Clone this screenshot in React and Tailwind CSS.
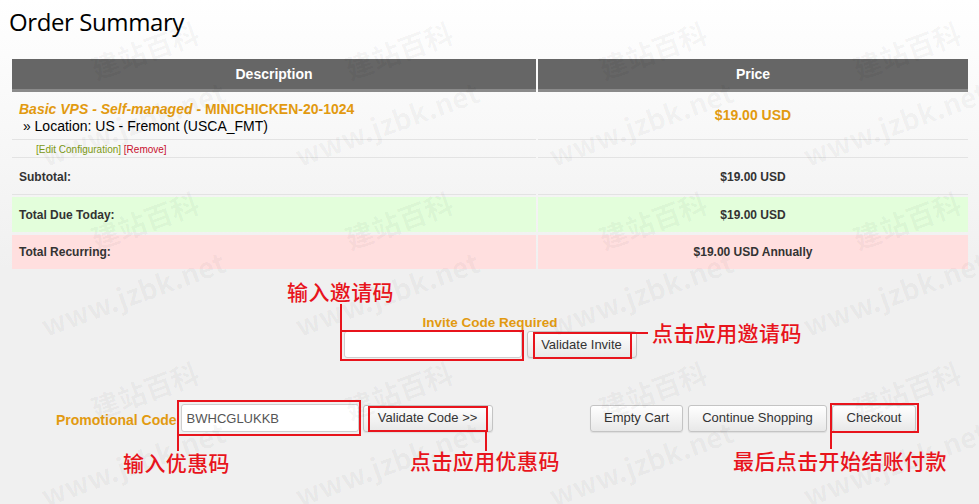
import React from 'react'

const marks = []
for (let r = 0; r < 3; r++) {
    for (let c = 0; c < 4; c++) {
        marks.push({ t: '建站百科', x: 92 + c * 254, y: 8 + r * 170 })
        marks.push({ t: 'www.jzbk.net', x: 42 + c * 254, y: 95 + r * 170 })
    }
}

const Btn = ({ children, className = '' }) => (
    <button className={"h-[27px] px-[13px] rounded-[3px] border border-[#c4c4c4] bg-[linear-gradient(to_bottom,#ffffff,#e8e8e8)] text-[13px] text-[#333] shadow-[0_1px_1px_rgba(0,0,0,0.08)] " + className}>
        {children}
    </button>
)

const Note = ({ children, className }) => (
    <div className={"absolute text-[21px] leading-none text-[#e8141c] font-medium tracking-[0.4px] whitespace-nowrap " + className} style={{ fontFamily: '"Noto Sans CJK SC", sans-serif' }}>
        {children}
    </div>
)

const App = () => {
    return (
        <div className="relative w-[979px] h-[504px] overflow-hidden bg-[linear-gradient(to_bottom,#ffffff,#f0f0f0_270px)] font-['Liberation_Sans',Arial,sans-serif]">
            {/* Title */}
            <h1 className="pl-[9px] pt-[5px] h-[59px] text-[24px] leading-[34px] text-black tracking-[-0.4px] font-['Open_Sans',sans-serif]">Order Summary</h1>

            {/* Cart table */}
            <div className="ml-[12px] w-[956px] flex flex-col gap-[2px]">
                <div className="grid grid-cols-[524px_430px] gap-[2px]">
                    <div className="h-[33px] bg-[#666] border-b-[3px] border-[#8a8a8a] text-white font-bold text-[14px] flex items-center justify-center">Description</div>
                    <div className="h-[33px] bg-[#666] border-b-[3px] border-[#8a8a8a] text-white font-bold text-[14px] flex items-center justify-center">Price</div>
                </div>
                <div className="grid grid-cols-[524px_430px] gap-[2px] -mt-[2px]">
                    <div className="h-[48px] border-b border-[#e3e3e3] pl-[7px] pt-[9px] text-[14px] leading-[17px]">
                        <div className="font-bold text-[#e29a10]"><i>Basic VPS - Self-managed</i> - MINICHICKEN-20-1024</div>
                        <div className="text-black">&nbsp;» Location: US - Fremont (USCA_FMT)</div>
                    </div>
                    <div className="h-[48px] border-b border-[#e3e3e3] flex items-center justify-center text-[14px] font-bold text-[#e29a10]">$19.00 USD</div>
                </div>
                <div className="grid grid-cols-[524px_430px] gap-[2px] -mt-[2px]">
                    <div className="h-[18px] border-b border-[#e3e3e3] pl-[24px] text-[10px] leading-[20px]">
                        <span className="text-[#7d9a14]">[Edit Configuration]</span> <span className="text-[#c8102e]">[Remove]</span>
                    </div>
                    <div className="h-[18px] border-b border-[#e3e3e3]"></div>
                </div>
                <div className="grid grid-cols-[524px_430px] gap-[2px] text-[12px] font-bold text-[#333]">
                    <div className="h-[35px] border-b border-[#e3e3e3] pl-[7px] flex items-center">Subtotal:</div>
                    <div className="h-[35px] border-b border-[#e3e3e3] flex items-center justify-center">$19.00 USD</div>
                </div>
                <div className="grid grid-cols-[524px_430px] gap-[2px] text-[12px] font-bold text-[#333]">
                    <div className="h-[35px] bg-[#e3fedb] pl-[7px] flex items-center">Total Due Today:</div>
                    <div className="h-[35px] bg-[#e3fedb] flex items-center justify-center">$19.00 USD</div>
                </div>
                <div className="grid grid-cols-[524px_430px] gap-[2px] text-[12px] font-bold text-[#333] mt-[1px]">
                    <div className="h-[34px] bg-[#ffdfdf] pl-[7px] flex items-center">Total Recurring:</div>
                    <div className="h-[34px] bg-[#ffdfdf] flex items-center justify-center">$19.00 USD Annually</div>
                </div>
            </div>

            {/* Invite code */}
            <div className="mt-[46px] flex flex-col items-center">
                <div className="text-[13.5px] font-bold text-[#e29a10] leading-[15px] ml-[1px]">Invite Code Required</div>
                <div className="mt-[1px] flex items-center gap-[5px] ml-[1px]">
                    <input className="w-[178px] h-[27px] bg-white border border-[#cfcfcf] rounded-[3px]" />
                    <Btn className="w-[110px] px-0">Validate Invite</Btn>
                </div>
            </div>

            {/* Promo + actions */}
            <div className="mt-[46px] flex items-center pl-[56px] pr-[63px]">
                <span className="text-[14px] font-bold text-[#e29a10] mr-[4px] mt-[5px]">Promotional Code</span>
                <input readOnly value="BWHCGLUKKB" className="w-[178px] h-[28px] bg-white border border-[#cfcfcf] rounded-[3px] px-[5px] text-[13px] text-[#555]" />
                <Btn className="ml-[4px] w-[130px] px-0">Validate Code &gt;&gt;</Btn>
                <div className="ml-auto flex gap-[5px]">
                    <Btn className="w-[93px] px-0">Empty Cart</Btn>
                    <Btn className="w-[139px] px-0">Continue Shopping</Btn>
                    <Btn className="w-[84px] px-0">Checkout</Btn>
                </div>
            </div>

            {/* Watermarks */}
            {marks.map((m, i) => (
                <div key={i} className="absolute pointer-events-none select-none whitespace-nowrap font-bold text-[28px] text-black/[0.04] -rotate-[20deg] origin-left" style={{ left: m.x, top: m.y + 40, fontFamily: '"Noto Sans CJK SC", "Liberation Sans", sans-serif' }}>
                    {m.t}
                </div>
            ))}

            {/* Annotations */}
            <div className="absolute left-[340px] top-[330px] w-[184px] h-[31px] border-2 border-[#e8141c]"></div>
            <div className="absolute left-[340px] top-[304px] w-[2px] h-[27px] bg-[#e8141c]"></div>
            <Note className="left-[287px] top-[281px]">输入邀请码</Note>

            <div className="absolute left-[533px] top-[332px] w-[99px] h-[27px] border-2 border-[#e8141c]"></div>
            <div className="absolute left-[631px] top-[332px] w-[17px] h-[2px] bg-[#e8141c]"></div>
            <Note className="left-[652px] top-[322px]">点击应用邀请码</Note>

            <div className="absolute left-[177px] top-[400px] w-[184px] h-[36px] border-2 border-[#e8141c]"></div>
            <div className="absolute left-[177px] top-[435px] w-[2px] h-[16px] bg-[#e8141c]"></div>
            <Note className="left-[123px] top-[452px]">输入优惠码</Note>

            <div className="absolute left-[368px] top-[406px] w-[120px] h-[26px] border-2 border-[#e8141c]"></div>
            <div className="absolute left-[485px] top-[431px] w-[2px] h-[20px] bg-[#e8141c]"></div>
            <Note className="left-[410px] top-[450px]">点击应用优惠码</Note>

            <div className="absolute left-[830px] top-[403px] w-[89px] h-[30px] border-2 border-[#e8141c]"></div>
            <div className="absolute left-[830px] top-[432px] w-[2px] h-[17px] bg-[#e8141c]"></div>
            <Note className="left-[733px] top-[450px]">最后点击开始结账付款</Note>
        </div>
    )
}

export default App
